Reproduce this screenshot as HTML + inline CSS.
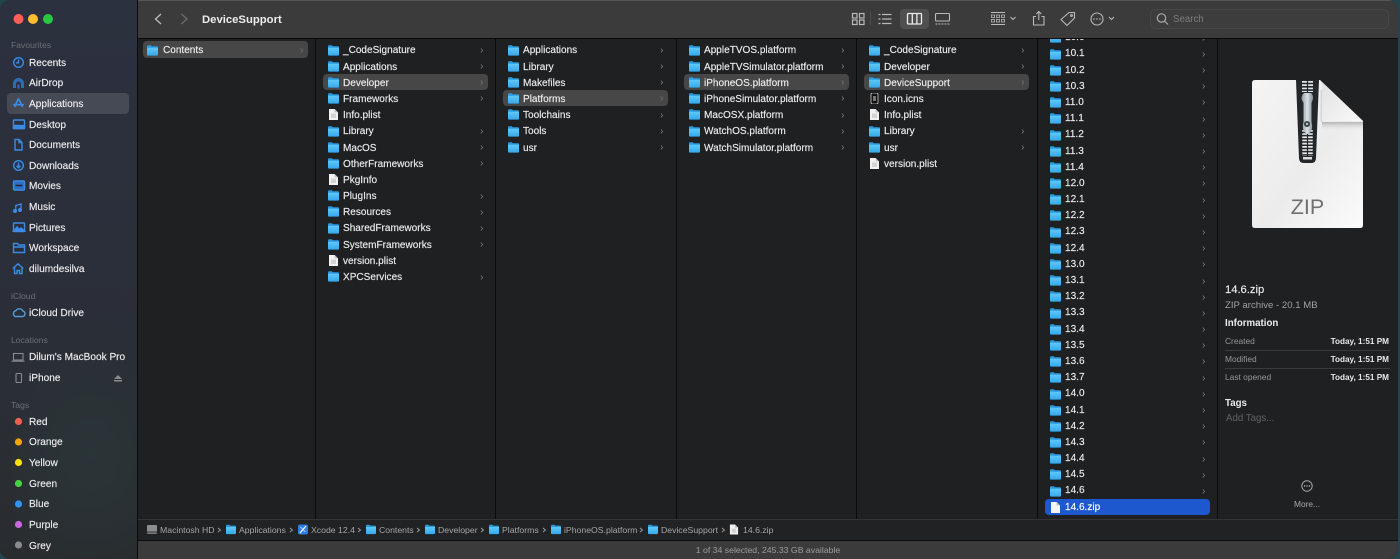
<!DOCTYPE html>
<html><head><meta charset="utf-8"><title>DeviceSupport</title>
<style>
html,body{margin:0;padding:0;width:1400px;height:559px;overflow:hidden;background:#23464c}
*{box-sizing:border-box}
body{font-family:"Liberation Sans",sans-serif;position:relative}
#w{position:absolute;left:0;top:0;width:1398px;height:559px;border-radius:10px;overflow:hidden;background:#1f2022;filter:blur(.35px)}
#side{position:absolute;left:0;top:0;width:137px;height:559px;background:radial-gradient(ellipse 100px 120px at 90px 455px,#2a3538 0,rgba(42,53,56,0) 100%),linear-gradient(180deg,#2c313f 0,#2b2f3a 45%,#292c2f 100%)}
#sl{position:absolute;left:137px;top:0;width:1px;height:559px;background:#0b0b0c}
#tb{position:absolute;left:138px;top:0;width:1260px;height:38px;background:#3a3b3a;border-top:1px solid #555}
#tbl{position:absolute;left:138px;top:38px;width:1260px;height:1px;background:#0a0a0a}
.t{position:absolute;white-space:nowrap;line-height:14px;height:14px}
.si{color:#ececee;font-size:10.1px;left:29px;margin-top:1.5px;-webkit-text-stroke:.15px #ececee}
.sh{color:#6c6f76;font-size:8.6px;left:11px}
.sep{position:absolute;top:39px;width:1px;height:480px;background:#0b0b0c}
.col{position:absolute;top:41.4px;width:165px}
.r{position:relative;height:16.2px;line-height:20px;padding-left:20px;font-size:10.05px;color:#ececec;white-space:nowrap;border-radius:4px;-webkit-text-stroke:.15px #ececec}
.r.s{background:#474747}
.r.b{background:#1e58cf;color:#fff}
.r svg.i{position:absolute;left:5px;top:3.2px;width:11px;height:11px}
.r svg.c{position:absolute;left:157px;top:6.5px;width:3.5px;height:5px}
.six .r{line-height:18px}
#path{position:absolute;left:138px;top:519px;width:1260px;height:22px;background:#212223;border-top:1px solid #343536;border-bottom:1px solid #0c0c0c}
#stat{position:absolute;left:138px;top:541px;width:1260px;height:18px;background:#3a3b3a}
.p{color:#a6a6a6;font-size:8.7px;top:523px}
.ic{position:absolute}
.lbl{color:#979797;font-size:8.4px;left:1225px}
.val{color:#e8e8e8;font-size:8.2px;font-weight:bold;right:9px;left:auto}
.ln{position:absolute;left:1225px;width:165px;height:1px;background:#3a3b3c}
</style></head><body>
<svg width="0" height="0" style="position:absolute">
<defs>
<linearGradient id="fg" x1="0" y1="0" x2="0" y2="1"><stop offset="0" stop-color="#5fc8f8"/><stop offset="1" stop-color="#35a8ea"/></linearGradient>
<symbol id="f" viewBox="0 0 11 11"><path d="M0 1.2Q0 .3 1 .3H3.8L4.8 1.2H10Q11 1.2 11 2.2V4H0Z" fill="#2a9ae0"/><path d="M0 2.8H11V9.6Q11 10.6 10 10.6H1Q0 10.6 0 9.6Z" fill="url(#fg)"/></symbol>
<symbol id="d" viewBox="0 0 11 11"><path d="M1 0H6.6L10 3.4V11H1Z" fill="#f2f2f2"/><path d="M6.6 0V3.4H10Z" fill="#c4c4c4"/><rect x="3" y="4.5" width="5" height="4.5" fill="#d4d4d4"/></symbol>
<symbol id="z" viewBox="0 0 11 11"><path d="M1 0H6.6L10 3.4V11H1Z" fill="#f4f4f4"/><path d="M6.6 0V3.4H10Z" fill="#bdbdbd"/></symbol>
<symbol id="c" viewBox="0 0 4 7"><path d="M.8 .8L3.2 3.5L.8 6.2" fill="none" stroke="#707173" stroke-width="1.2"/></symbol>
</defs></svg>
<div id="w">
<div id="side">
<svg style="position:absolute;left:0;top:0" width="137" height="559">
<circle cx="18.5" cy="19" r="5" fill="#ff5f57"/><circle cx="33" cy="19" r="5" fill="#febc2e"/><circle cx="48" cy="19" r="5" fill="#28c840"/>
<rect x="7" y="93" width="122" height="21" rx="4" fill="#464a55"/>
<g fill="none" stroke="#3b8be6" stroke-width="1.4">
<circle cx="18.5" cy="62.5" r="4.8"/><path d="M18.5 59.5V62.8H16"/>
<path d="M13 88V83.5A5.5 5.5 0 0 1 24 83.5V88H21V84A2.5 2.5 0 0 0 16 84V88Z" fill="#2e6db4" stroke="none"/><path d="M18.5 84.5V88.5" stroke="#2e6db4" stroke-width="2"/>
<path d="M18.5 98.5L14.5 107M18.5 98.5L22.5 107M13.2 104.7H23.8" stroke-width="1.6"/>
<rect x="13.5" y="120" width="11" height="8.5" rx="1"/><rect x="13.5" y="125.5" width="11" height="3" fill="#3b8be6"/>
<path d="M15 139.5H19L22 142.5V150H15ZM19 139.5V142.5H22"/>
<circle cx="18.5" cy="165.5" r="4.8"/><path d="M18.5 162.5V167.5M16.5 165.8L18.5 167.8L20.5 165.8"/>
<rect x="13.5" y="181" width="11" height="9" rx="1" fill="#2f6fc0"/><path d="M15.5 185.5H22.5" stroke="#1b2636"/>
<path d="M15.8 211V205.5L21 204V210" stroke-width="1.3"/><circle cx="15" cy="211" r="1.3" fill="#3b8be6"/><circle cx="20" cy="210" r="1.3" fill="#3b8be6"/>
<rect x="13.5" y="223" width="11" height="8.5" rx=".8"/><path d="M13.5 231L17 227L19.5 229.5L21 228L24.5 231Z" fill="#3b8be6"/>
<path d="M13.5 243.5H17.5L18.5 245H24.5V252.5H13.5ZM13.5 247H24.5"/>
<path d="M12.8 268.5L18 263.8L23.2 268.5M14.5 267.5V273.5H17V270.5H19.5V273.5H22V267.5"/>
<path d="M15.2 316.5H22.5A2.7 2.7 0 0 0 23 311.2A4 4 0 0 0 15.9 310.7A3.1 3.1 0 0 0 15.2 316.5Z" stroke="#4f9fd6"/>
</g>
<g fill="none" stroke="#8a8a8d" stroke-width="1.1"><rect x="13.5" y="353.5" width="9.5" height="6.5"/><path d="M11.5 361.2H24.5"/><rect x="16" y="373.5" width="5.5" height="9" rx="1"/></g>
<path d="M114 379L118 375L122 379ZM114 380H122V381.5H114Z" fill="#8a8a8d"/>
<circle cx="18.5" cy="421.5" r="3.6" fill="#f25f50"/><circle cx="18.5" cy="442" r="3.6" fill="#f5a607"/><circle cx="18.5" cy="462.5" r="3.6" fill="#fbdf0c"/><circle cx="18.5" cy="483.5" r="3.6" fill="#44d244"/><circle cx="18.5" cy="504" r="3.6" fill="#2f94f5"/><circle cx="18.5" cy="524.5" r="3.6" fill="#c768e0"/><circle cx="18.5" cy="545" r="3.6" fill="#8a8a8d"/>
</svg>
<div class="t sh" style="top:38px">Favourites</div>
<div class="t si" style="top:55px">Recents</div>
<div class="t si" style="top:75.5px">AirDrop</div>
<div class="t si" style="top:96px">Applications</div>
<div class="t si" style="top:117px">Desktop</div>
<div class="t si" style="top:137.5px">Documents</div>
<div class="t si" style="top:158px">Downloads</div>
<div class="t si" style="top:178.5px">Movies</div>
<div class="t si" style="top:199px">Music</div>
<div class="t si" style="top:220px">Pictures</div>
<div class="t si" style="top:240.5px">Workspace</div>
<div class="t si" style="top:261px">dilumdesilva</div>
<div class="t sh" style="top:289px">iCloud</div>
<div class="t si" style="top:305px">iCloud Drive</div>
<div class="t sh" style="top:333px">Locations</div>
<div class="t si" style="top:349.5px">Dilum's MacBook Pro</div>
<div class="t si" style="top:370.5px">iPhone</div>
<div class="t sh" style="top:398px">Tags</div>
<div class="t si" style="top:414px">Red</div>
<div class="t si" style="top:434.5px">Orange</div>
<div class="t si" style="top:455px">Yellow</div>
<div class="t si" style="top:476px">Green</div>
<div class="t si" style="top:496.5px">Blue</div>
<div class="t si" style="top:517px">Purple</div>
<div class="t si" style="top:538px">Grey</div>
</div>
<div id="sl"></div>
<div id="tb"></div><div id="tbl"></div>
<svg style="position:absolute;left:0;top:0" width="1398" height="38">
<g fill="none" stroke="#b9b9b9" stroke-width="1.2">
<path d="M161 14L155.5 19L161 24" stroke-width="1.4"/>
<path d="M181.5 14L187 19L181.5 24" stroke="#6a6a6a" stroke-width="1.4"/>
<rect x="852.5" y="13.5" width="4.5" height="4.5"/><rect x="859.5" y="13.5" width="4.5" height="4.5"/><rect x="852.5" y="20" width="4.5" height="4.5"/><rect x="859.5" y="20" width="4.5" height="4.5"/>
<path d="M870.5 12V25" stroke="#4f4f4f" stroke-width="1"/>
<path d="M882 14.5H891.5M882 19H891.5M882 23.5H891.5"/><path d="M878.5 14.5H880.5M878.5 19H880.5M878.5 23.5H880.5"/>
</g>
<rect x="900" y="9" width="29" height="20" rx="4" fill="#4e4f4e"/>
<g fill="none" stroke="#ececec" stroke-width="1.3"><rect x="907.5" y="13.5" width="14" height="10.5" rx="1"/><path d="M912.3 13.5V24M916.9 13.5V24"/></g>
<g fill="none" stroke="#b9b9b9" stroke-width="1.1">
<rect x="935.5" y="13.5" width="14" height="7.5" rx="1"/><path d="M935.5 24H949.5" stroke-dasharray="2 1"/>
<path d="M991 12.5H1005M991 24.5H1005" stroke-width="1"/>
<rect x="991.5" y="15" width="3" height="2.5" stroke-width=".8"/><rect x="996.5" y="15" width="3" height="2.5" stroke-width=".8"/><rect x="1001.5" y="15" width="3" height="2.5" stroke-width=".8"/>
<rect x="991.5" y="19.5" width="3" height="2.5" stroke-width=".8"/><rect x="996.5" y="19.5" width="3" height="2.5" stroke-width=".8"/><rect x="1001.5" y="19.5" width="3" height="2.5" stroke-width=".8"/>
<path d="M1010.5 17L1013 19.5L1015.5 17"/>
<path d="M1036 16.5H1033.5V25H1044V16.5H1041.5M1038.8 20V11.5M1036.3 14L1038.8 11.5L1041.3 14"/>
<path d="M1061 19.5L1069 12.5H1074.5V18L1067 25.5Z"/><circle cx="1071.5" cy="15.5" r=".9"/>
<circle cx="1097" cy="19" r="6"/>
<path d="M1109 17L1111.5 19.5L1114 17"/>
</g>
<g fill="#b9b9b9"><circle cx="1094" cy="19" r=".8"/><circle cx="1097" cy="19" r=".8"/><circle cx="1100" cy="19" r=".8"/></g>
<rect x="1150.5" y="9.5" width="238" height="19" rx="5" fill="#3c3d3c" stroke="#464746"/>
<g fill="none" stroke="#a9a9a9" stroke-width="1.2"><circle cx="1161.5" cy="18" r="4.2"/><path d="M1164.5 21.2L1168 24.5"/></g>
</svg>
<div class="t" style="left:202px;top:12.5px;color:#ececec;font-size:11.3px;font-weight:bold">DeviceSupport</div>
<div class="t" style="left:1173px;top:13px;color:#7d7e7d;font-size:9.7px">Search</div>

<div class="sep" style="left:315px"></div><div class="sep" style="left:495px"></div><div class="sep" style="left:676px"></div><div class="sep" style="left:856px"></div><div class="sep" style="left:1037px"></div><div class="sep" style="left:1217px"></div>

<div class="col" style="left:143px">
<div class="r s" style="padding-left:20px"><svg class="i" style="left:4px"><use href="#f"/></svg>Contents<svg class="c"><use href="#c"/></svg></div>
</div>
<div class="col" style="left:323px">
<div class="r"><svg class="i"><use href="#f"/></svg>_CodeSignature<svg class="c"><use href="#c"/></svg></div>
<div class="r"><svg class="i"><use href="#f"/></svg>Applications<svg class="c"><use href="#c"/></svg></div>
<div class="r s"><svg class="i"><use href="#f"/></svg>Developer<svg class="c"><use href="#c"/></svg></div>
<div class="r"><svg class="i"><use href="#f"/></svg>Frameworks<svg class="c"><use href="#c"/></svg></div>
<div class="r"><svg class="i"><use href="#d"/></svg>Info.plist</div>
<div class="r"><svg class="i"><use href="#f"/></svg>Library<svg class="c"><use href="#c"/></svg></div>
<div class="r"><svg class="i"><use href="#f"/></svg>MacOS<svg class="c"><use href="#c"/></svg></div>
<div class="r"><svg class="i"><use href="#f"/></svg>OtherFrameworks<svg class="c"><use href="#c"/></svg></div>
<div class="r"><svg class="i"><use href="#d"/></svg>PkgInfo</div>
<div class="r"><svg class="i"><use href="#f"/></svg>PlugIns<svg class="c"><use href="#c"/></svg></div>
<div class="r"><svg class="i"><use href="#f"/></svg>Resources<svg class="c"><use href="#c"/></svg></div>
<div class="r"><svg class="i"><use href="#f"/></svg>SharedFrameworks<svg class="c"><use href="#c"/></svg></div>
<div class="r"><svg class="i"><use href="#f"/></svg>SystemFrameworks<svg class="c"><use href="#c"/></svg></div>
<div class="r"><svg class="i"><use href="#d"/></svg>version.plist</div>
<div class="r"><svg class="i"><use href="#f"/></svg>XPCServices<svg class="c"><use href="#c"/></svg></div>
</div>
<div class="col" style="left:503px">
<div class="r"><svg class="i"><use href="#f"/></svg>Applications<svg class="c"><use href="#c"/></svg></div>
<div class="r"><svg class="i"><use href="#f"/></svg>Library<svg class="c"><use href="#c"/></svg></div>
<div class="r"><svg class="i"><use href="#f"/></svg>Makefiles<svg class="c"><use href="#c"/></svg></div>
<div class="r s"><svg class="i"><use href="#f"/></svg>Platforms<svg class="c"><use href="#c"/></svg></div>
<div class="r"><svg class="i"><use href="#f"/></svg>Toolchains<svg class="c"><use href="#c"/></svg></div>
<div class="r"><svg class="i"><use href="#f"/></svg>Tools<svg class="c"><use href="#c"/></svg></div>
<div class="r"><svg class="i"><use href="#f"/></svg>usr<svg class="c"><use href="#c"/></svg></div>
</div>
<div class="col" style="left:684px">
<div class="r"><svg class="i"><use href="#f"/></svg>AppleTVOS.platform<svg class="c"><use href="#c"/></svg></div>
<div class="r"><svg class="i"><use href="#f"/></svg>AppleTVSimulator.platform<svg class="c"><use href="#c"/></svg></div>
<div class="r s"><svg class="i"><use href="#f"/></svg>iPhoneOS.platform<svg class="c"><use href="#c"/></svg></div>
<div class="r"><svg class="i"><use href="#f"/></svg>iPhoneSimulator.platform<svg class="c"><use href="#c"/></svg></div>
<div class="r"><svg class="i"><use href="#f"/></svg>MacOSX.platform<svg class="c"><use href="#c"/></svg></div>
<div class="r"><svg class="i"><use href="#f"/></svg>WatchOS.platform<svg class="c"><use href="#c"/></svg></div>
<div class="r"><svg class="i"><use href="#f"/></svg>WatchSimulator.platform<svg class="c"><use href="#c"/></svg></div>
</div>
<div class="col" style="left:864px">
<div class="r"><svg class="i"><use href="#f"/></svg>_CodeSignature<svg class="c"><use href="#c"/></svg></div>
<div class="r"><svg class="i"><use href="#f"/></svg>Developer<svg class="c"><use href="#c"/></svg></div>
<div class="r s"><svg class="i"><use href="#f"/></svg>DeviceSupport<svg class="c"><use href="#c"/></svg></div>
<div class="r"><svg class="i" viewBox="0 0 11 11"><rect x="2" y="0" width="7" height="11" rx="1.5" fill="#111" stroke="#ccc" stroke-width=".8"/><rect x="4" y="3" width="3" height="5" fill="#777"/></svg>Icon.icns</div>
<div class="r"><svg class="i"><use href="#d"/></svg>Info.plist</div>
<div class="r"><svg class="i"><use href="#f"/></svg>Library<svg class="c"><use href="#c"/></svg></div>
<div class="r"><svg class="i"><use href="#f"/></svg>usr<svg class="c"><use href="#c"/></svg></div>
<div class="r"><svg class="i"><use href="#d"/></svg>version.plist</div>
</div>
<div style="position:absolute;left:1038px;top:39px;width:179px;height:480px;overflow:hidden">
<div class="col six" style="left:7px;top:-9.8px">
<div class="r"><svg class="i"><use href="#f"/></svg>10.0<svg class="c"><use href="#c"/></svg></div>
<div class="r"><svg class="i"><use href="#f"/></svg>10.1<svg class="c"><use href="#c"/></svg></div>
<div class="r"><svg class="i"><use href="#f"/></svg>10.2<svg class="c"><use href="#c"/></svg></div>
<div class="r"><svg class="i"><use href="#f"/></svg>10.3<svg class="c"><use href="#c"/></svg></div>
<div class="r"><svg class="i"><use href="#f"/></svg>11.0<svg class="c"><use href="#c"/></svg></div>
<div class="r"><svg class="i"><use href="#f"/></svg>11.1<svg class="c"><use href="#c"/></svg></div>
<div class="r"><svg class="i"><use href="#f"/></svg>11.2<svg class="c"><use href="#c"/></svg></div>
<div class="r"><svg class="i"><use href="#f"/></svg>11.3<svg class="c"><use href="#c"/></svg></div>
<div class="r"><svg class="i"><use href="#f"/></svg>11.4<svg class="c"><use href="#c"/></svg></div>
<div class="r"><svg class="i"><use href="#f"/></svg>12.0<svg class="c"><use href="#c"/></svg></div>
<div class="r"><svg class="i"><use href="#f"/></svg>12.1<svg class="c"><use href="#c"/></svg></div>
<div class="r"><svg class="i"><use href="#f"/></svg>12.2<svg class="c"><use href="#c"/></svg></div>
<div class="r"><svg class="i"><use href="#f"/></svg>12.3<svg class="c"><use href="#c"/></svg></div>
<div class="r"><svg class="i"><use href="#f"/></svg>12.4<svg class="c"><use href="#c"/></svg></div>
<div class="r"><svg class="i"><use href="#f"/></svg>13.0<svg class="c"><use href="#c"/></svg></div>
<div class="r"><svg class="i"><use href="#f"/></svg>13.1<svg class="c"><use href="#c"/></svg></div>
<div class="r"><svg class="i"><use href="#f"/></svg>13.2<svg class="c"><use href="#c"/></svg></div>
<div class="r"><svg class="i"><use href="#f"/></svg>13.3<svg class="c"><use href="#c"/></svg></div>
<div class="r"><svg class="i"><use href="#f"/></svg>13.4<svg class="c"><use href="#c"/></svg></div>
<div class="r"><svg class="i"><use href="#f"/></svg>13.5<svg class="c"><use href="#c"/></svg></div>
<div class="r"><svg class="i"><use href="#f"/></svg>13.6<svg class="c"><use href="#c"/></svg></div>
<div class="r"><svg class="i"><use href="#f"/></svg>13.7<svg class="c"><use href="#c"/></svg></div>
<div class="r"><svg class="i"><use href="#f"/></svg>14.0<svg class="c"><use href="#c"/></svg></div>
<div class="r"><svg class="i"><use href="#f"/></svg>14.1<svg class="c"><use href="#c"/></svg></div>
<div class="r"><svg class="i"><use href="#f"/></svg>14.2<svg class="c"><use href="#c"/></svg></div>
<div class="r"><svg class="i"><use href="#f"/></svg>14.3<svg class="c"><use href="#c"/></svg></div>
<div class="r"><svg class="i"><use href="#f"/></svg>14.4<svg class="c"><use href="#c"/></svg></div>
<div class="r"><svg class="i"><use href="#f"/></svg>14.5<svg class="c"><use href="#c"/></svg></div>
<div class="r"><svg class="i"><use href="#f"/></svg>14.6<svg class="c"><use href="#c"/></svg></div>
<div class="r b" style="-webkit-text-stroke:.15px #fff"><svg class="i"><use href="#z"/></svg>14.6.zip</div>
</div>
</div>

<svg class="ic" style="left:1245px;top:72px" width="125" height="165" viewBox="1245 72 125 165">
<defs>
<linearGradient id="dg" x1="0" y1="0" x2="1" y2="1"><stop offset="0" stop-color="#f4f4f4"/><stop offset=".55" stop-color="#ececec"/><stop offset="1" stop-color="#fbfbfb"/></linearGradient>
<linearGradient id="fo" x1="0" y1="0" x2="1" y2="1"><stop offset="0" stop-color="#e0e0e0"/><stop offset="1" stop-color="#fafafa"/></linearGradient>
<linearGradient id="slg" x1="0" y1="0" x2="1" y2="0"><stop offset="0" stop-color="#8c9aa0"/><stop offset=".5" stop-color="#dbe2e5"/><stop offset="1" stop-color="#7d8a90"/></linearGradient>
<linearGradient id="shd" x1="0" y1="0" x2="0" y2="1"><stop offset="0" stop-color="#b4b4b4"/><stop offset="1" stop-color="#eee" stop-opacity="0"/></linearGradient>
<linearGradient id="shl" x1="1" y1="0" x2="0" y2="0"><stop offset="0" stop-color="#c8c8c8"/><stop offset="1" stop-color="#eee" stop-opacity="0"/></linearGradient>
</defs>
<path d="M1255 80H1320L1363 121V225Q1363 228 1360 228H1255Q1252 228 1252 225V83Q1252 80 1255 80Z" fill="url(#dg)"/>
<path d="M1319 90H1322V122H1319Z" fill="url(#shl)"/>
<path d="M1322 122H1363V131H1322Z" fill="url(#shd)"/>
<path d="M1320 80L1363 121H1326Q1322 121 1322 117V82Z" fill="url(#fo)"/>
<path d="M1296 80H1319L1316 158Q1316 163 1311 163H1304Q1299 163 1299 158Z" fill="#23272a"/>
<path d="M1307.5 81V92" stroke="#dfe4e6" stroke-width="11" stroke-dasharray="1.7 1.6" fill="none"/>
<path d="M1307.5 130V156" stroke="#e6eaec" stroke-width="10.5" stroke-dasharray="1.7 1.5" fill="none"/>
<path d="M1307.5 80V158" stroke="#23272a" stroke-width="1.2" fill="none"/>
<rect x="1303" y="157" width="9" height="2.5" fill="#d8dcde"/>
<path d="M1304 93H1311Q1313.5 95 1313 99L1311.5 103V122Q1313 127 1311 132L1307.5 134L1304 132Q1302 127 1303.5 122V103L1301.5 99Q1301.5 95 1304 93Z" fill="url(#slg)"/>
<circle cx="1307" cy="124" r="3" fill="#374045"/><circle cx="1307" cy="124" r="1.2" fill="#b8c2c6"/>
</svg>
<div class="t" style="left:1252px;top:194px;width:111px;height:26px;line-height:26px;text-align:center;color:#707070;font-size:21.5px">ZIP</div>

<div class="t" style="left:1225px;top:283px;color:#ececec;font-size:11.2px;-webkit-text-stroke:.15px #ececec">14.6.zip</div>
<div class="t" style="left:1225px;top:299px;color:#a0a0a0;font-size:9.6px">ZIP archive - 20.1 MB</div>
<div class="t" style="left:1225px;top:317px;color:#ececec;font-size:9.7px;font-weight:bold">Information</div>
<div class="t lbl" style="top:334px">Created</div><div class="t val" style="top:335px">Today, 1:51 PM</div>
<div class="ln" style="top:349.5px"></div>
<div class="t lbl" style="top:352px">Modified</div><div class="t val" style="top:353px">Today, 1:51 PM</div>
<div class="ln" style="top:368px"></div>
<div class="t lbl" style="top:370px">Last opened</div><div class="t val" style="top:371px">Today, 1:51 PM</div>
<div class="t" style="left:1225px;top:396.5px;color:#ececec;font-size:9.7px;font-weight:bold">Tags</div>
<div class="t" style="left:1226px;top:412px;color:#606163;font-size:9.7px">Add Tags...</div>
<svg class="ic" style="left:1300px;top:479px" width="14" height="14"><circle cx="7" cy="7" r="5.2" fill="none" stroke="#a8a8a8"/><circle cx="4.6" cy="7" r=".7" fill="#bbb"/><circle cx="7" cy="7" r=".7" fill="#bbb"/><circle cx="9.4" cy="7" r=".7" fill="#bbb"/></svg>
<div class="t" style="left:1277px;width:60px;text-align:center;top:497px;color:#a8a8a8;font-size:8.4px">More...</div>

<div id="path"></div><div id="stat"></div>
<svg class="ic" style="left:0;top:519px" width="800" height="22">
<rect x="147" y="6" width="10" height="9" rx="1" fill="#8d8d8d"/><rect x="147" y="12" width="10" height="2.5" fill="#5e5e5e"/>
<use href="#f" x="226" y="5.5" width="10" height="10"/>
<rect x="298" y="5.5" width="10" height="10" rx="2" fill="#2a7fe0"/><path d="M300 14L306 7" stroke="#fff" stroke-width="1.2"/><path d="M300.5 8L305.5 13" stroke="#cfe4ff" stroke-width=".8"/>
<use href="#f" x="366" y="5.5" width="10" height="10"/>
<use href="#f" x="425" y="5.5" width="10" height="10"/>
<use href="#f" x="489" y="5.5" width="10" height="10"/>
<use href="#f" x="551" y="5.5" width="10" height="10"/>
<use href="#f" x="648" y="5.5" width="10" height="10"/>
<use href="#d" x="729" y="5.5" width="10" height="10"/>
<g fill="none" stroke="#a0a0a0" stroke-width=".9">
<path d="M218 9L220.5 11L218 13M290 9L292.5 11L290 13M358 9L360.5 11L358 13M417 9L419.5 11L417 13M481 9L483.5 11L481 13M543 9L545.5 11L543 13M640 9L642.5 11L640 13M722 9L724.5 11L722 13"/>
</g></svg>
<div class="t p" style="left:160px">Macintosh HD</div>
<div class="t p" style="left:239px">Applications</div>
<div class="t p" style="left:311px">Xcode 12.4</div>
<div class="t p" style="left:379px">Contents</div>
<div class="t p" style="left:438px">Developer</div>
<div class="t p" style="left:502px">Platforms</div>
<div class="t p" style="left:564px">iPhoneOS.platform</div>
<div class="t p" style="left:661px">DeviceSupport</div>
<div class="t p" style="left:743px">14.6.zip</div>
<div class="t" style="left:138px;width:1260px;text-align:center;top:543px;color:#9c9c9c;font-size:8.7px">1 of 34 selected, 245.33 GB available</div>
</div>
</body></html>
